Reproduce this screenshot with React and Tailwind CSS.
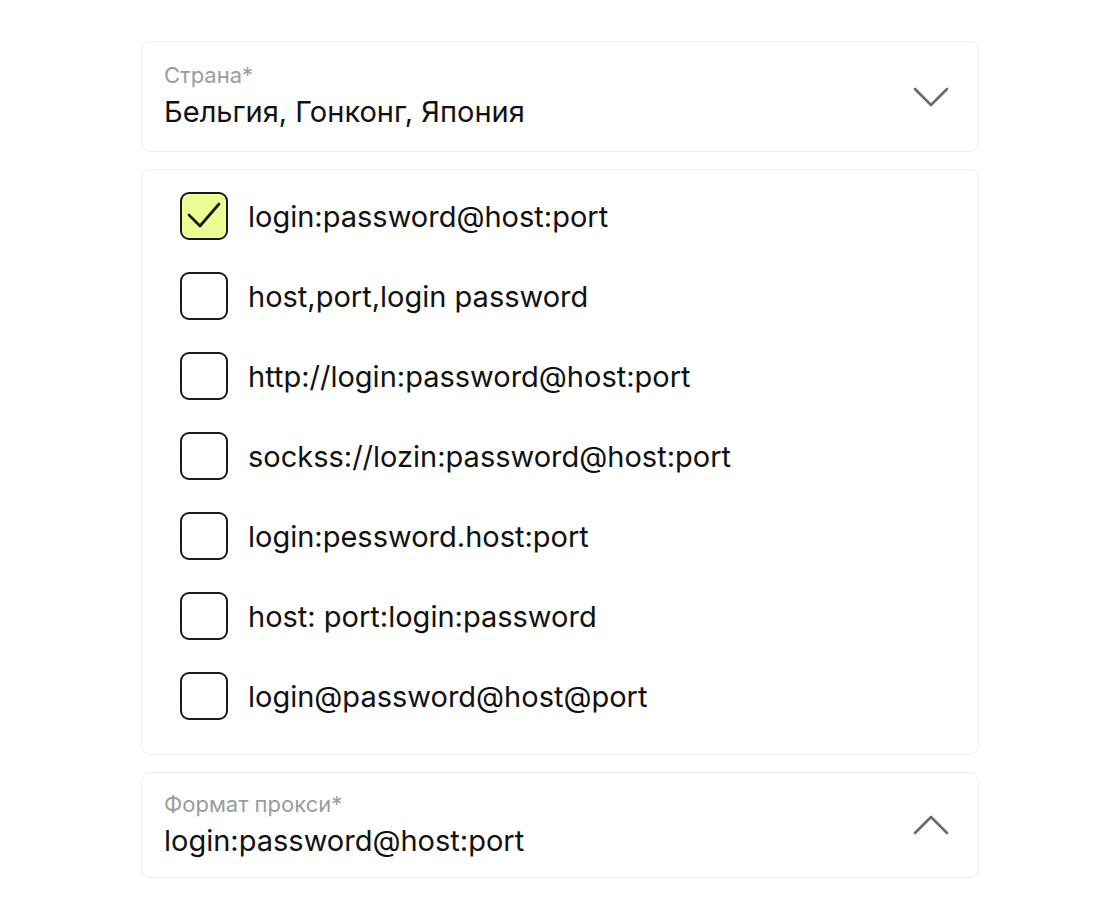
import React from 'react'

const formats = [
  'login:password@host:port',
  'host,port,login password',
  'http://login:password@host:port',
  'sockss://lozin:password@host:port',
  'login:pessword.host:port',
  'host: port:login:password',
  'login@password@host@port',
]

function Chevron({ up }) {
  return (
    <svg width="36" height="20" viewBox="0 0 36 20" fill="none" className="shrink-0">
      <path
        d={up ? 'M2 18 L18 2 L34 18' : 'M2 2 L18 18 L34 2'}
        stroke="#6b6b6b"
        strokeWidth="2.6"
        strokeLinecap="round"
        strokeLinejoin="round"
      />
    </svg>
  )
}

function Checkbox({ checked }) {
  return (
    <div
      className={
        'w-12 h-12 shrink-0 rounded-[9px] border-2 border-[#1a1a1a] flex items-center justify-center ' +
        (checked ? 'bg-[#eaff94]' : 'bg-white')
      }
    >
      {checked && (
        <svg width="44" height="44" viewBox="0 0 44 44" fill="none">
          <path
            d="M7 21 L18 32 L37 10"
            stroke="#1a1a1a"
            strokeWidth="2.8"
            strokeLinecap="round"
            strokeLinejoin="round"
          />
        </svg>
      )}
    </div>
  )
}

export default function App() {
  const [selected, setSelected] = React.useState(0)

  return (
    <div className="min-h-screen bg-white pt-[41px] px-[141px] font-['Inter','Liberation_Sans',sans-serif] text-[#111]">
      <div className="w-[838px] flex flex-col gap-[17px]">
        <div className="h-[111px] rounded-[10px] border border-[#ececec] pl-[22px] pr-[29px] flex items-center justify-between">
          <div className="flex flex-col pb-[2px]">
            <span className="text-[22px] leading-[26px] text-[#9c9c9c]">Страна*</span>
            <span className="text-[29px] leading-[35px] mt-[6px]">Бельгия, Гонконг, Япония</span>
          </div>
          <Chevron />
        </div>

        <div className="rounded-[10px] border border-[#ececec] pl-[38px] pt-[22px] pb-[34px] flex flex-col gap-[32px]">
          {formats.map((f, i) => (
            <label
              key={f}
              className="flex items-center gap-5 cursor-pointer"
              onClick={() => setSelected(i)}
            >
              <Checkbox checked={selected === i} />
              <span className="text-[29px] leading-[35px]">{f}</span>
            </label>
          ))}
        </div>

        <div className="h-[106px] rounded-[10px] border border-[#ececec] pl-[22px] pr-[29px] flex items-center justify-between">
          <div className="flex flex-col pb-[1px]">
            <span className="text-[22px] leading-[26px] text-[#9c9c9c]">Формат прокси*</span>
            <span className="text-[29px] leading-[35px] mt-[6px]">{formats[selected]}</span>
          </div>
          <Chevron up />
        </div>
      </div>
    </div>
  )
}
